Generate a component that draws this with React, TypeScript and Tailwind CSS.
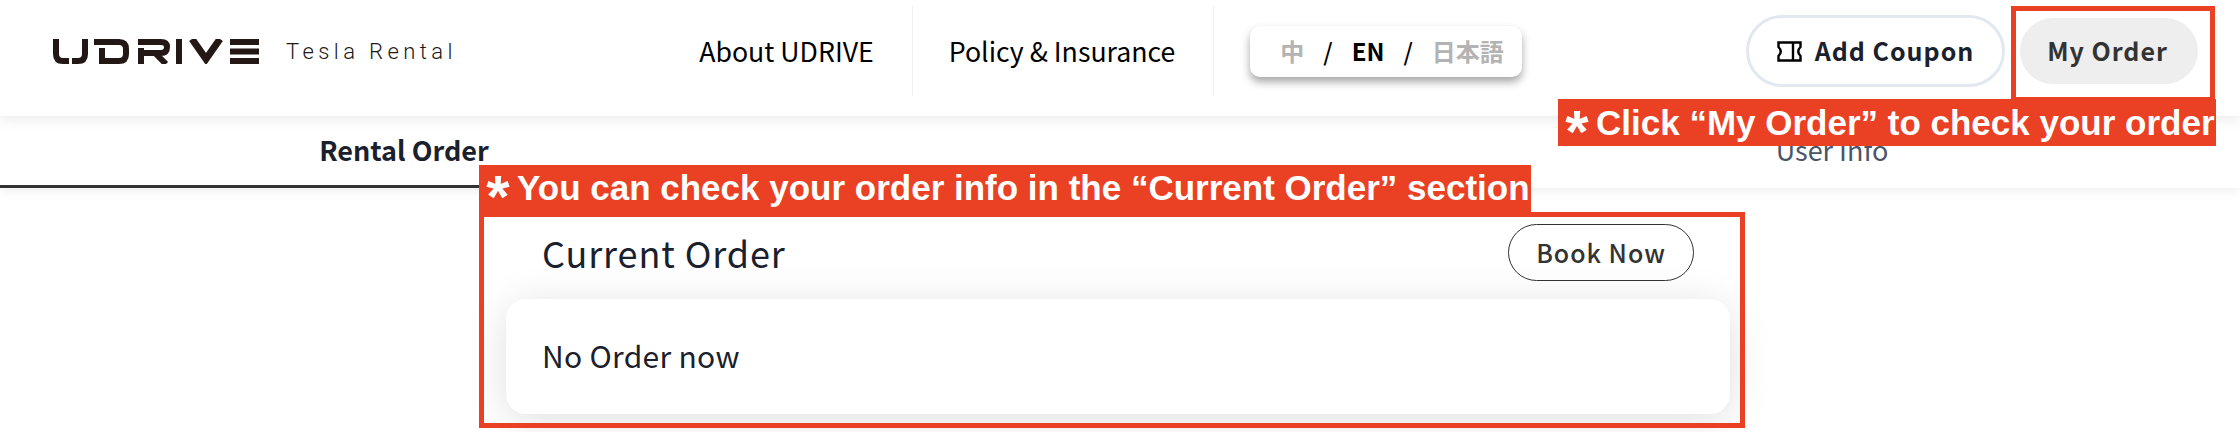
import { ReactNode } from 'react';

const cjk = "font-['Noto_Sans_CJK_JP',sans-serif]";

function Logo() {
  return (
    <svg width="207" height="25" viewBox="0 0 207 25" fill="none" stroke="#231815" strokeWidth="6">
      <path d="M3 0V15Q3 22 10 22H16" />
      <path d="M32 0V15Q32 22 25 22H19" />
      <path d="M41 3H66Q73 3 73 10V15Q73 22 66 22H49V9" />
      <path d="M85 3H108Q114 3 114 8Q114 14 108 14H88M88 9V25M102 14L113 25" />
      <path d="M126 0V25" />
      <path d="M139 0L153 20L167 0" strokeWidth="7" />
      <path d="M177 3H206M177 12.5H206M177 22H206" />
    </svg>
  );
}

function CouponIcon() {
  return (
    <svg width="25" height="21" viewBox="0 0 25 21" fill="none" stroke="#000" strokeWidth="2.4">
      <path d="M1.5 1.5H23.5V6Q19 10.5 23.5 15V19.5H1.5V15Q6 10.5 1.5 6Z" />
      <path d="M16 1.5V19.5" />
    </svg>
  );
}

function Note({ className, children }: { className: string; children: ReactNode }) {
  return (
    <div
      className={`absolute flex items-center bg-[#ea4125] pl-[9px] font-['Liberation_Sans',sans-serif] text-[35px] font-bold whitespace-nowrap text-white ${className}`}
    >
      <span className="mr-[9px] flex h-[20px] w-[20px] -translate-y-[11px] items-start justify-center text-[60px] leading-[60px]">*</span>
      {children}
    </div>
  );
}

export default function App() {
  return (
    <div className={`relative h-[432px] w-[2240px] overflow-hidden bg-white ${cjk}`}>
      <header className="relative z-10 flex h-[116px] items-center bg-white pr-[42px] pb-[14px] pl-[53px] shadow-[0_4px_12px_rgba(0,0,0,0.08)]">
        <Logo />
        <span className="ml-[26px] w-[170px] font-['Roboto',sans-serif] text-[22px] font-light tracking-[4.4px] whitespace-nowrap text-[#231815]">
          Tesla Rental
        </span>
        <nav className="mt-[6px] ml-[207px] flex h-[90px] items-center self-start">
          <a className="flex h-full w-[250px] items-center justify-center border-r border-[#f0f0f0] pr-[2px] text-[26.7px] text-black">
            About UDRIVE
          </a>
          <a className="flex h-full w-[301px] items-center justify-center border-r border-[#f0f0f0] pr-[2px] text-[26.7px] text-black">
            Policy &amp; Insurance
          </a>
        </nav>
        <div className="ml-[36px] flex h-[51px] w-[272px] items-center justify-center gap-[19px] rounded-[10px] bg-white pl-[12px] text-[24px] font-medium shadow-[0_5px_8px_rgba(0,0,0,0.35)]">
          <span className="font-bold text-[#b3b3b3]">中</span>
          <span>/</span>
          <span className="font-bold text-black">EN</span>
          <span>/</span>
          <span className="font-bold text-[#b3b3b3]">日本語</span>
        </div>
        <button className="ml-auto flex h-[72px] w-[259px] items-center justify-center gap-[13px] rounded-full border-[3px] border-[#e2e8f0] text-[25px] font-bold tracking-[1px] text-[#1a202c]">
          <CouponIcon />
          Add Coupon
        </button>
        <button className="ml-[15px] h-[66px] w-[178px] rounded-full bg-[#eeeeee] pr-[3px] text-[25px] font-bold tracking-[1px] text-[#333333]">
          My Order
        </button>
      </header>

      <div className="flex h-[72px] justify-between shadow-[0_4px_10px_rgba(0,0,0,0.06)]">
        <div className="flex w-[808px] items-center justify-center border-b-[3px] border-[#333333] text-[27px] font-bold text-[#1a202c]">
          Rental Order
        </div>
        <div className="flex w-[816px] items-center justify-center border-b-[3px] border-transparent text-[27px] text-[#4a5568]">
          User Info
        </div>
      </div>

      <main className="mt-[36px] ml-[506px] w-[1224px]">
        <div className="flex h-[57px] items-center justify-between pr-[36px] pl-[36px]">
          <h2 className="pb-[2px] text-[36px] font-normal tracking-[0.9px] text-[#1a202c]">Current Order</h2>
          <button className="h-[57px] w-[186px] rounded-full border border-[#333333] text-[25px] font-medium tracking-[1px] text-[#333333]">
            Book Now
          </button>
        </div>
        <div className="mt-[18px] flex h-[115px] items-center rounded-[20px] bg-white pb-[2px] pl-[36px] text-[30px] tracking-[0.3px] text-[#1a202c] shadow-[0_6px_40px_rgba(0,0,0,0.13)]">
          No Order now
        </div>
      </main>

      {/* annotations drawn over the page */}
      <div className="absolute top-[6px] left-[2011px] z-20 h-[96px] w-[204px] border-[5px] border-[#ea4125]" />
      <div className="absolute top-[212px] left-[479px] z-20 h-[216px] w-[1266px] border-[5px] border-[#ea4125]" />
      <Note className="top-[99px] left-[1558px] z-30 h-[47px] w-[658px] pt-[1px]">
        Click “My Order” to check your order
      </Note>
      <Note className="top-[165px] left-[479px] z-30 h-[52px] w-[1052px] pb-[6px]">
        You can check your order info in the “Current Order” section
      </Note>
    </div>
  );
}
